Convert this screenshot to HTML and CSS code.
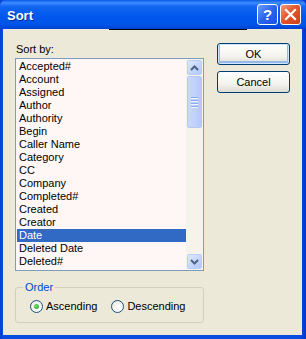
FILE: index.html
```html
<!DOCTYPE html>
<html lang="en">
<head>
    <meta charset="UTF-8">
    <title>Sort</title>
    <link rel="stylesheet" href="styles.css">
</head>
<body>
    <div class="janela">
        <div class="titulo">
            <span class="titulo-texto">Sort</span>
            <div class="botao-titulo ajuda">?</div>
            <div class="botao-titulo fechar">
                <svg width="13" height="13" viewBox="0 0 13 13">
                    <path d="M2 2 L11 11 M11 2 L2 11" stroke="#fff" stroke-width="2.2" stroke-linecap="square"/>
                </svg>
            </div>
        </div>

        <div class="conteudo">
            <div class="linha-topo"></div>
            <div class="principal">
                <div class="coluna">
                    <div class="rotulo">Sort by:</div>
                    <div class="lista">
                        <div class="itens">
                            <div class="item">Accepted#</div>
                            <div class="item">Account</div>
                            <div class="item">Assigned</div>
                            <div class="item">Author</div>
                            <div class="item">Authority</div>
                            <div class="item">Begin</div>
                            <div class="item">Caller Name</div>
                            <div class="item">Category</div>
                            <div class="item">CC</div>
                            <div class="item">Company</div>
                            <div class="item">Completed#</div>
                            <div class="item">Created</div>
                            <div class="item">Creator</div>
                            <div class="item selecionado">Date</div>
                            <div class="item">Deleted Date</div>
                            <div class="item">Deleted#</div>
                        </div>
                        <div class="rolagem">
                            <div class="seta">
                                <svg width="9" height="6" viewBox="0 0 9 6">
                                    <path d="M1 5 L4.5 1.5 L8 5" fill="none" stroke="#4d6185" stroke-width="2"/>
                                </svg>
                            </div>
                            <div class="polegar">
                                <div class="grip"></div>
                                <div class="grip"></div>
                                <div class="grip"></div>
                                <div class="grip"></div>
                            </div>
                            <div class="trilho"></div>
                            <div class="seta">
                                <svg width="9" height="6" viewBox="0 0 9 6">
                                    <path d="M1 1 L4.5 4.5 L8 1" fill="none" stroke="#4d6185" stroke-width="2"/>
                                </svg>
                            </div>
                        </div>
                    </div>

                    <fieldset class="grupo">
                        <legend>Order</legend>
                        <div class="opcoes">
                            <div class="opcao">
                                <span class="radio marcado"></span>
                                <span>Ascending</span>
                            </div>
                            <div class="opcao">
                                <span class="radio"></span>
                                <span>Descending</span>
                            </div>
                        </div>
                    </fieldset>
                </div>

                <div class="botoes">
                    <div class="botao padrao">OK</div>
                    <div class="botao">Cancel</div>
                </div>
            </div>
        </div>
    </div>
</body>
</html>
```

FILE: styles.css
```css
body {
    margin: 0;
    padding: 0;
    font-family: 'Liberation Sans', Arial, sans-serif;
    font-size: 11px;
    background: #0842d8;
}

.janela {
    width: 306px;
    height: 339px;
    display: flex;
    flex-direction: column;
    background: linear-gradient(to right, #0a3fd0, #0a4be0 3px, #0a4be0 300px, #0433c8);
}

.titulo {
    height: 29px;
    display: flex;
    align-items: center;
    padding: 0 5px 0 7px;
    gap: 2px;
    background: linear-gradient(to bottom, #0a5ae8 0%, #3d8cff 10%, #1366f0 22%, #0058ee 55%, #0054e8 85%, #0042d0 100%);
    border-radius: 6px 6px 0 0;
}

.titulo-texto {
    flex: 1;
    color: #fff;
    font-size: 13px;
    font-weight: bold;
    text-shadow: 1px 1px 0 #0a2a90;
    margin-top: 1px;
}

.botao-titulo {
    width: 19px;
    height: 19px;
    border: 1px solid #fff;
    border-radius: 3px;
    display: flex;
    align-items: center;
    justify-content: center;
    color: #fff;
    font-size: 15px;
    font-weight: bold;
}

.ajuda {
    background: linear-gradient(135deg, #6f9bff, #2a62f0 50%, #1d4fe0);
}

.fechar {
    background: linear-gradient(135deg, #f29a7a, #e2572f 45%, #c93f1a);
}

.conteudo {
    flex: 1;
    margin: 0 4px 4px 3px;
    background: #ece9d8;
}

.linha-topo {
    height: 1px;
    width: 138px;
    margin-left: 106px;
    background: #000;
}

.principal {
    display: flex;
    gap: 13px;
    padding: 13px 0 0 12px;
}

.coluna {
    width: 189px;
    display: flex;
    flex-direction: column;
}

.rotulo {
    height: 13px;
    line-height: 13px;
    padding-left: 1px;
    color: #000;
}

.lista {
    margin-top: 2px;
    height: 211px;
    border: 1px solid #7f9db9;
    background: #fff7f6;
    display: flex;
}

.itens {
    flex: 1;
    padding: 1px 0 0 1px;
}

.item {
    height: 13px;
    line-height: 13px;
    padding-left: 2px;
    color: #000;
    white-space: nowrap;
}

.item.selecionado {
    background: #316ac5;
    color: #fff;
}

.rolagem {
    width: 17px;
    display: flex;
    flex-direction: column;
    background: #f5f3ea;
    padding-top: 1px;
    padding-bottom: 1px;
}

.seta {
    width: 15px;
    height: 15px;
    margin-left: 1px;
    border: 1px solid #bccdf6;
    border-radius: 2px;
    box-sizing: border-box;
    background: linear-gradient(135deg, #dfe8fe, #c2d3fc 60%, #b3c7f6);
    display: flex;
    align-items: center;
    justify-content: center;
}

.polegar {
    width: 15px;
    height: 52px;
    margin: 1px 0 0 1px;
    box-sizing: border-box;
    border: 1px solid #b4c8f6;
    border-radius: 2px;
    background: linear-gradient(to right, #cad8fc, #c1d2fb 50%, #b5c8f7);
    display: flex;
    flex-direction: column;
    align-items: center;
    justify-content: center;
    gap: 1px;
}

.grip {
    width: 7px;
    height: 1px;
    background: #8aa7ef;
    border-bottom: 1px solid #eef3ff;
}

.trilho {
    flex: 1;
}

.grupo {
    margin: 10px 0 0 0;
    padding: 6px 0 9px 14px;
    border: 1px solid #d0d0bf;
    border-radius: 3px;
}

.grupo legend {
    color: #0046d5;
    padding: 0 2px;
    margin-left: -7px;
    line-height: 13px;
}

.opcoes {
    display: flex;
    gap: 14px;
}

.opcao {
    display: flex;
    align-items: center;
    gap: 3px;
    line-height: 13px;
    color: #000;
}

.radio {
    width: 13px;
    height: 13px;
    box-sizing: border-box;
    border: 1px solid #1c5180;
    border-radius: 50%;
    background: radial-gradient(circle at 65% 65%, #fff 20%, #e0ddd3 100%);
    display: flex;
    align-items: center;
    justify-content: center;
}

.radio.marcado::after {
    content: '';
    width: 5px;
    height: 5px;
    border-radius: 50%;
    background: radial-gradient(circle at 40% 40%, #6ee06e, #21a121);
}

.botoes {
    display: flex;
    flex-direction: column;
    gap: 6px;
}

.botao {
    width: 73px;
    height: 22px;
    box-sizing: border-box;
    border: 1px solid #003c74;
    border-radius: 3px;
    background: linear-gradient(to bottom, #ffffff, #f4f3ee 60%, #dedcd1);
    display: flex;
    align-items: center;
    justify-content: center;
    color: #000;
}

.botao.padrao {
    box-shadow: inset 0 0 0 1px #cee7ff, inset 0 -1px 0 2px #98b8ea;
}
```
